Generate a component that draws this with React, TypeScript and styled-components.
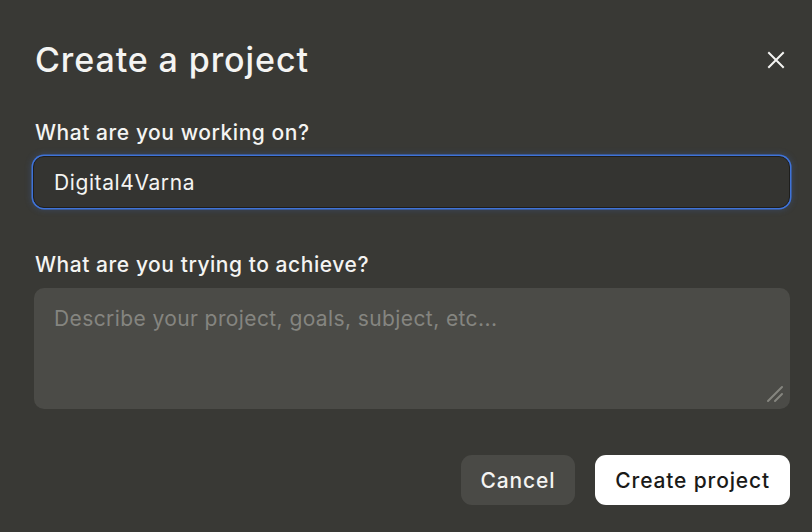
import styled, { createGlobalStyle } from "styled-components";

const GlobalStyle = createGlobalStyle`
    html, body {
        margin: 0;
        padding: 0;
        background: #393935;
    }
    * {
        box-sizing: border-box;
    }
`;

// Dialog
const Dialog = styled.div`
    width: 812px;
    height: 532px;
    padding: 40px 22px 0 35px;
    background: #393935;
    font-family: Inter, "Noto Sans", sans-serif;
    color: #f4f4f2;
    display: flex;
    flex-direction: column;
`;

const Header = styled.div`
    display: flex;
    justify-content: space-between;
    align-items: center;
`;

const Title = styled.h2`
    margin: 0;
    font-size: 34px;
    font-weight: 500;
    letter-spacing: 0.9px;
    line-height: 40px;
`;

const CloseButton = styled.button`
    width: 28px;
    height: 28px;
    padding: 0;
    border: none;
    background: transparent;
    color: #f4f4f2;
    display: flex;
    align-items: center;
    justify-content: center;
`;

// Fields
const Field = styled.label<{ top: number }>`
    display: flex;
    flex-direction: column;
    gap: 10px;
    margin-top: ${({ top }) => `${top}px`};
`;

const Label = styled.span`
    font-size: 21px;
    font-weight: 500;
    letter-spacing: 0.55px;
    line-height: 26px;
`;

const Input = styled.div`
    height: 52px;
    margin-left: -2px;
    padding: 0 20px;
    display: flex;
    align-items: center;
    border-radius: 11px;
    background: #343431;
    border: 1.5px solid #1e1e1c;
    box-shadow: 0 0 0 1.5px #3f73d9, 0 0 6px 2px rgba(63, 115, 217, 0.25);
    font-size: 21px;
    letter-spacing: 0.6px;
    color: #f4f4f2;
`;

const TextArea = styled.div`
    position: relative;
    height: 121px;
    margin-left: -1px;
    padding: 18px 20px;
    border-radius: 10px;
    background: #4b4b47;
    font-size: 21px;
    letter-spacing: 0.4px;
    color: #858580;
`;

const Grip = styled.svg`
    position: absolute;
    right: 6px;
    bottom: 6px;
`;

// Footer
const Footer = styled.div`
    margin-top: auto;
    margin-bottom: 27px;
    display: flex;
    justify-content: flex-end;
    gap: 20px;
`;

const Button = styled.button<{ primary?: boolean }>`
    height: 50px;
    padding: 0 20px;
    border: none;
    border-radius: 11px;
    font-family: Inter, "Noto Sans", sans-serif;
    font-size: 21px;
    font-weight: 500;
    letter-spacing: 0.85px;
    background: ${({ primary }) => (primary ? "#ffffff" : "#4a4a46")};
    color: ${({ primary }) => (primary ? "#1a1a18" : "#f4f4f2")};
`;

export default function App() {
    return (
        <>
            <GlobalStyle />
            <Dialog>
                <Header>
                    <Title>Create a project</Title>
                    <CloseButton aria-label="Close">
                        <svg width="18" height="18" viewBox="0 0 18 18" fill="none" stroke="currentColor" strokeWidth="2" strokeLinecap="square">
                            <path d="M2 2 L16 16 M16 2 L2 16" />
                        </svg>
                    </CloseButton>
                </Header>

                <Field top={40}>
                    <Label>What are you working on?</Label>
                    <Input>Digital4Varna</Input>
                </Field>

                <Field top={44}>
                    <Label>What are you trying to achieve?</Label>
                    <TextArea>
                        Describe your project, goals, subject, etc...
                        <Grip width="18" height="18" viewBox="0 0 18 18" fill="none" stroke="#85857f" strokeWidth="2" strokeLinecap="round">
                            <path d="M2 16 L16 2 M9 16 L16 9" />
                        </Grip>
                    </TextArea>
                </Field>

                <Footer>
                    <Button>Cancel</Button>
                    <Button primary>Create project</Button>
                </Footer>
            </Dialog>
        </>
    );
}
